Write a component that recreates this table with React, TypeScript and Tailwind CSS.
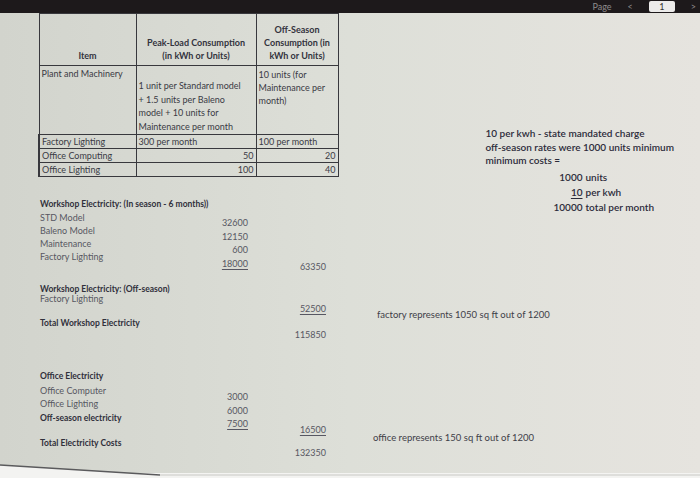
import React from "react";

const F = "font-['Lato','Open_Sans',sans-serif]";

function Line({
  children,
  className = "",
}: {
  children?: React.ReactNode;
  className?: string;
}) {
  return <div className={`h-[13px] leading-[13px] whitespace-nowrap ${className}`}>{children}</div>;
}

export default function App() {
  const td = "border border-[#38383d] px-[2px] align-top";
  return (
    <div className={`relative w-[700px] h-[478px] overflow-hidden bg-[#f4f4f2] ${F}`}>
      {/* top dark bar */}
      <div className="h-[13px] bg-[#1d191b] flex items-center justify-end pr-[4px] overflow-hidden">
        <div className="flex items-center gap-[16px] text-[9px] leading-[11px] text-[#8e8b8c]">
          <span>Page</span>
          <span>&lt;</span>
          <span className="w-[26px] h-[11px] bg-[#ecebea] rounded-[2px] text-[#333] text-center leading-[11px]">1</span>
          <span>&gt;</span>
        </div>
      </div>

      {/* sheet */}
      <div className="h-[460px] bg-gradient-to-r from-[#d2d4cd] via-[#dddfd8] to-[#e6e4df]">
        {/* upper area */}
        <div className="flex items-start h-[159px]">
          <table className="ml-[38px] border-collapse text-[9px] leading-[13px] text-[#3a3a44] table-fixed">
            <colgroup>
              <col className="w-[97px]" />
              <col className="w-[120px]" />
              <col className="w-[82px]" />
            </colgroup>
            <tbody>
              <tr className="h-[52px] font-bold text-[#33333d]">
                <td className={`${td} !align-bottom text-center pb-[3px]`}>Item</td>
                <td className={`${td} !align-bottom text-center pb-[3px]`}>
                  Peak-Load Consumption
                  <br />
                  (in kWh or Units)
                </td>
                <td className={`${td} !align-bottom text-center pb-[3px]`}>
                  Off-Season
                  <br />
                  Consumption (in
                  <br />
                  kWh or Units)
                </td>
              </tr>
              <tr className="h-[69px]">
                <td className={`${td} pt-[1px]`}>Plant and Machinery</td>
                <td className={`${td} !align-bottom pb-[1px]`}>
                  <div className="leading-[13.5px]">
                    1 unit per Standard model
                    <br />+ 1.5 units per Baleno
                    <br />
                    model + 10 units for
                    <br />
                    Maintenance per month
                  </div>
                </td>
                <td className={`${td} pt-[2px]`}>
                  10 units (for
                  <br />
                  Maintenance per
                  <br />
                  month)
                </td>
              </tr>
              <tr className="h-[13px]">
                <td className={`${td} border-l-2 py-0`}>Factory Lighting</td>
                <td className={`${td} py-0`}>300 per month</td>
                <td className={`${td} py-0`}>100 per month</td>
              </tr>
              <tr className="h-[13px]">
                <td className={`${td} border-l-2 py-0`}>Office Computing</td>
                <td className={`${td} py-0 text-right`}>50</td>
                <td className={`${td} py-0 text-right`}>20</td>
              </tr>
              <tr className="h-[13px]">
                <td className={`${td} border-l-2 py-0`}>Office Lighting</td>
                <td className={`${td} py-0 text-right`}>100</td>
                <td className={`${td} py-0 text-right`}>40</td>
              </tr>
            </tbody>
          </table>

          {/* notes */}
          <div className="ml-[147px] mt-[114px] text-[10px] font-semibold text-[#2c2b3a]">
            <Line>10 per kwh - state mandated charge</Line>
            <Line className="mt-[1px]">off-season rates were 1000 units minimum</Line>
            <Line>minimum costs =</Line>
            <div className="grid grid-cols-[97px_auto] gap-x-[3px] mt-[3px] leading-[15px]">
              <span className="text-right">1000</span>
              <span>units</span>
              <span className="text-right">
                <span className="underline underline-offset-2">10</span>
              </span>
              <span>per kwh</span>
              <span className="text-right">10000</span>
              <span>total per month</span>
            </div>
          </div>
        </div>

        {/* lower area */}
        <div className="flex items-start pl-[40px] mt-[26px] text-[9px] text-[#575762]">
          {/* labels */}
          <div className="w-[150px]">
            <Line className="font-bold text-[8.5px] text-[#30303b]">Workshop Electricity: (In season - 6 months))</Line>
            <Line>STD Model</Line>
            <Line>Baleno Model</Line>
            <Line>Maintenance</Line>
            <Line>Factory Lighting</Line>
            <div className="mt-[20px] h-[9px] leading-[13px] whitespace-nowrap font-bold text-[8.5px] text-[#30303b]">
              Workshop Electricity: (Off-season)
            </div>
            <Line>Factory Lighting</Line>
            <Line className="mt-[12px] font-bold text-[8.5px] text-[#30303b]">Total Workshop Electricity</Line>
            <Line className="mt-[40px] font-bold text-[8.5px] text-[#30303b]">Office Electricity</Line>
            <Line className="mt-[1px]">Office Computer</Line>
            <Line>Office Lighting</Line>
            <Line className="mt-[2px] font-bold text-[8.5px] text-[#30303b]">Off-season electricity</Line>
            <Line className="mt-[12px] font-bold text-[8.5px] text-[#30303b]">Total Electricity Costs</Line>
          </div>

          {/* numbers */}
          <div className="w-[58px] text-right">
            <div className="mt-[18px]" />
            <div className="h-[13.5px] leading-[13.5px]">32600</div>
            <div className="h-[13.5px] leading-[13.5px]">12150</div>
            <div className="h-[13.5px] leading-[13.5px]">600</div>
            <div className="h-[13.5px] leading-[13.5px]">
              <span className="underline underline-offset-2">18000</span>
            </div>
            <div className="h-[13.5px] leading-[13.5px] mt-[120px]">3000</div>
            <div className="h-[13.5px] leading-[13.5px]">6000</div>
            <div className="h-[13.5px] leading-[13.5px]">
              <span className="underline underline-offset-2">7500</span>
            </div>
          </div>

          {/* totals */}
          <div className="w-[78px] text-right">
            <Line className="mt-[62px]">63350</Line>
            <Line className="mt-[29px]">
              <span className="underline underline-offset-2">52500</span>
            </Line>
            <Line className="mt-[13px]">115850</Line>
            <Line className="mt-[82px]">
              <span className="underline underline-offset-2">16500</span>
            </Line>
            <Line className="mt-[10px]">132350</Line>
          </div>

          {/* side notes */}
          <div className="ml-[51px] text-[9.5px] text-[#3e3e48]">
            <Line className="mt-[110px]">factory represents 1050 sq ft out of 1200</Line>
            <Line className="mt-[110px] -ml-[4px]">office represents 150 sq ft out of 1200</Line>
          </div>
        </div>
      </div>

      {/* photo edge of the sheet at the bottom */}
      <svg className="absolute left-0 bottom-0" width="700" height="16" viewBox="0 0 700 16">
        <polygon points="0,3 160,13 700,13 700,16 0,16" fill="#f3f3f1" />
        <line x1="0" y1="3" x2="160" y2="13" stroke="#5a5a5c" strokeWidth="1.5" />
        <line x1="160" y1="13" x2="700" y2="13" stroke="#c9c9c5" strokeWidth="1" />
      </svg>
    </div>
  );
}
